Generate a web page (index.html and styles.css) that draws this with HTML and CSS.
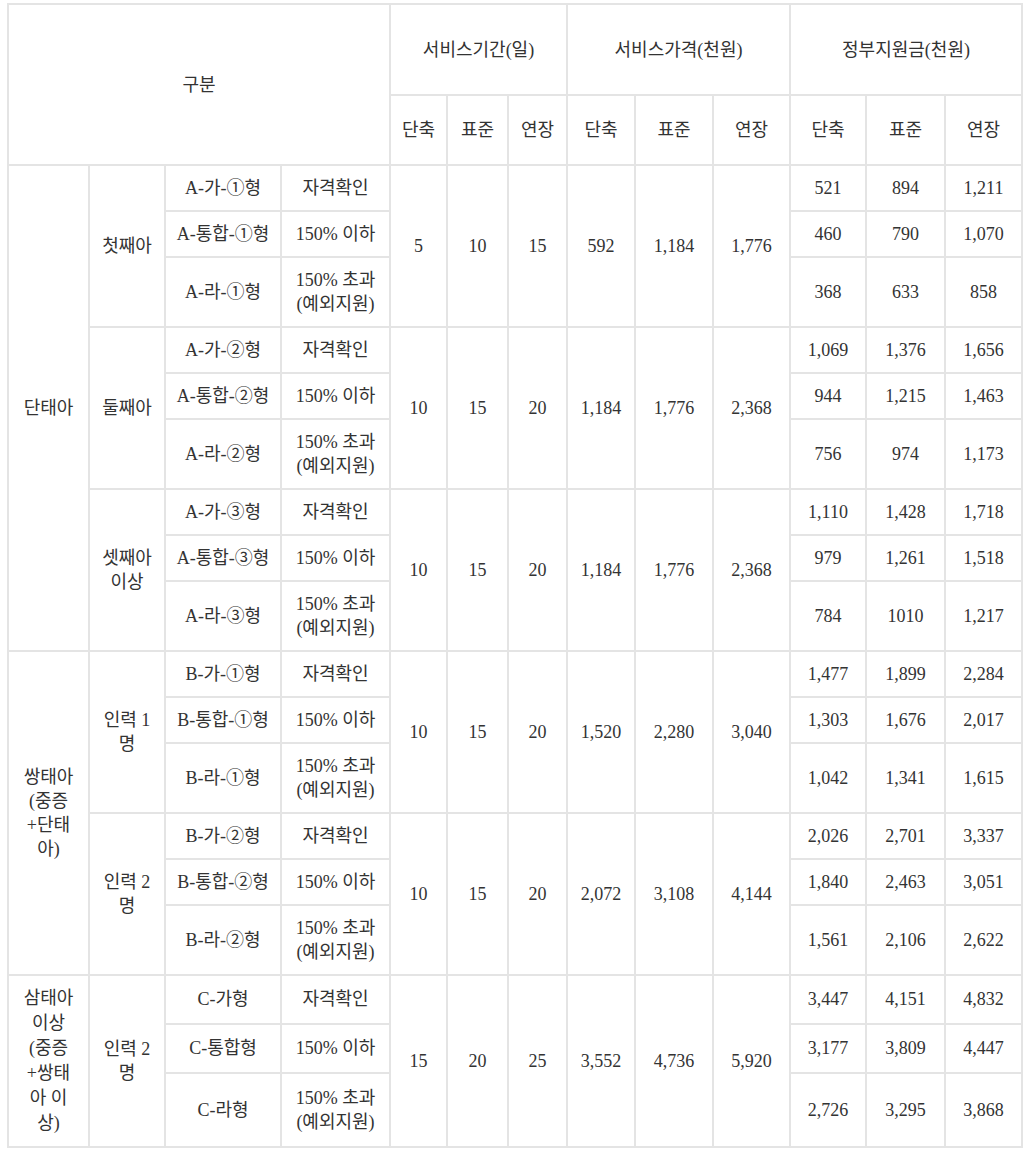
FILE: index.html
```html
<!DOCTYPE html>
<html lang="ko">
<head>
<meta charset="utf-8">
<link rel="stylesheet" href="styles.css">
</head>
<body>
<table class="price">
<colgroup>
<col class="c1"><col class="c2"><col class="c3"><col class="c4">
<col class="c5"><col class="c6"><col class="c7">
<col class="c8"><col class="c9"><col class="c10">
<col class="c11"><col class="c12"><col class="c13">
</colgroup>
<thead>
<tr class="h1">
<th colspan="4" rowspan="2">구분</th>
<th colspan="3">서비스기간(일)</th>
<th colspan="3">서비스가격(천원)</th>
<th colspan="3">정부지원금(천원)</th>
</tr>
<tr class="h2">
<th>단축</th><th>표준</th><th>연장</th>
<th>단축</th><th>표준</th><th>연장</th>
<th>단축</th><th>표준</th><th>연장</th>
</tr>
</thead>
<tbody>
<tr>
<td rowspan="9">단태아</td>
<td rowspan="3">첫째아</td>
<td>A-가-①형</td><td>자격확인</td>
<td rowspan="3">5</td><td rowspan="3">10</td><td rowspan="3">15</td>
<td rowspan="3">592</td><td rowspan="3">1,184</td><td rowspan="3">1,776</td>
<td>521</td><td>894</td><td>1,211</td>
</tr>
<tr><td>A-통합-①형</td><td>150% 이하</td><td>460</td><td>790</td><td>1,070</td></tr>
<tr><td>A-라-①형</td><td>150% 초과<br>(예외지원)</td><td>368</td><td>633</td><td>858</td></tr>

<tr>
<td rowspan="3">둘째아</td>
<td>A-가-②형</td><td>자격확인</td>
<td rowspan="3">10</td><td rowspan="3">15</td><td rowspan="3">20</td>
<td rowspan="3">1,184</td><td rowspan="3">1,776</td><td rowspan="3">2,368</td>
<td>1,069</td><td>1,376</td><td>1,656</td>
</tr>
<tr><td>A-통합-②형</td><td>150% 이하</td><td>944</td><td>1,215</td><td>1,463</td></tr>
<tr><td>A-라-②형</td><td>150% 초과<br>(예외지원)</td><td>756</td><td>974</td><td>1,173</td></tr>

<tr>
<td rowspan="3">셋째아<br>이상</td>
<td>A-가-③형</td><td>자격확인</td>
<td rowspan="3">10</td><td rowspan="3">15</td><td rowspan="3">20</td>
<td rowspan="3">1,184</td><td rowspan="3">1,776</td><td rowspan="3">2,368</td>
<td>1,110</td><td>1,428</td><td>1,718</td>
</tr>
<tr><td>A-통합-③형</td><td>150% 이하</td><td>979</td><td>1,261</td><td>1,518</td></tr>
<tr><td>A-라-③형</td><td>150% 초과<br>(예외지원)</td><td>784</td><td>1010</td><td>1,217</td></tr>

<tr>
<td rowspan="6">쌍태아<br>(중증<br>+단태<br>아)</td>
<td rowspan="3">인력 1<br>명</td>
<td>B-가-①형</td><td>자격확인</td>
<td rowspan="3">10</td><td rowspan="3">15</td><td rowspan="3">20</td>
<td rowspan="3">1,520</td><td rowspan="3">2,280</td><td rowspan="3">3,040</td>
<td>1,477</td><td>1,899</td><td>2,284</td>
</tr>
<tr><td>B-통합-①형</td><td>150% 이하</td><td>1,303</td><td>1,676</td><td>2,017</td></tr>
<tr><td>B-라-①형</td><td>150% 초과<br>(예외지원)</td><td>1,042</td><td>1,341</td><td>1,615</td></tr>

<tr>
<td rowspan="3">인력 2<br>명</td>
<td>B-가-②형</td><td>자격확인</td>
<td rowspan="3">10</td><td rowspan="3">15</td><td rowspan="3">20</td>
<td rowspan="3">2,072</td><td rowspan="3">3,108</td><td rowspan="3">4,144</td>
<td>2,026</td><td>2,701</td><td>3,337</td>
</tr>
<tr><td>B-통합-②형</td><td>150% 이하</td><td>1,840</td><td>2,463</td><td>3,051</td></tr>
<tr><td>B-라-②형</td><td>150% 초과<br>(예외지원)</td><td>1,561</td><td>2,106</td><td>2,622</td></tr>

<tr>
<td rowspan="3" class="tall">삼태아<br>이상<br>(중증<br>+쌍태<br>아 이<br>상)</td>
<td rowspan="3">인력 2<br>명</td>
<td>C-가형</td><td>자격확인</td>
<td rowspan="3">15</td><td rowspan="3">20</td><td rowspan="3">25</td>
<td rowspan="3">3,552</td><td rowspan="3">4,736</td><td rowspan="3">5,920</td>
<td>3,447</td><td>4,151</td><td>4,832</td>
</tr>
<tr><td>C-통합형</td><td>150% 이하</td><td>3,177</td><td>3,809</td><td>4,447</td></tr>
<tr><td>C-라형</td><td>150% 초과<br>(예외지원)</td><td>2,726</td><td>3,295</td><td>3,868</td></tr>
</tbody>
</table>
</body>
</html>
```
FILE: styles.css
```css
html, body {
  background: #ffffff;
}
body {
  margin: 3px 0 0 7px;
  font-family: "Liberation Serif", "Noto Sans CJK KR", serif;
  font-size: 18px;
  color: #333333;
}
.price {
  border-collapse: collapse;
  table-layout: fixed;
  width: 1016px;
  border: 2px solid #e4e4e4;
}
.price th,
.price td {
  border: 2px solid #e4e4e4;
  padding: 10px 2px 10px 2px;
  line-height: 24px;
  text-align: center;
  vertical-align: middle;
  font-weight: normal;
}
.price tr.h1 th { height: 89px; padding: 0 2px; }
.price tr.h2 th { height: 68px; padding: 0 2px; }
.price td.tall { line-height: 25px; }
.c1 { width: 81px; }
.c2 { width: 76px; }
.c3 { width: 116px; }
.c4 { width: 109px; }
.c5 { width: 57px; }
.c6 { width: 61px; }
.c7 { width: 59px; }
.c8 { width: 68px; }
.c9 { width: 78px; }
.c10 { width: 77px; }
.c11 { width: 76px; }
.c12 { width: 79px; }
.c13 { width: 77px; }
```
